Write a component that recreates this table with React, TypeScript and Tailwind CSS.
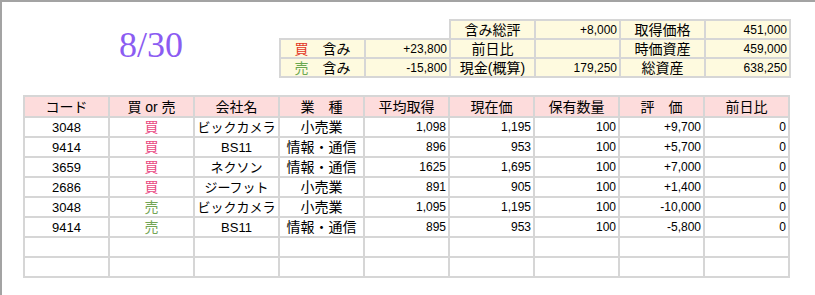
import React from 'react';

const font = "font-['Liberation_Sans','Noto_Sans_CJK_JP',sans-serif]";

const headers = ['コード', '買 or 売', '会社名', '業　種', '平均取得', '現在価', '保有数量', '評　価', '前日比'];

const rows: string[][] = [
  ['3048', '買', 'ビックカメラ', '小売業', '1,098', '1,195', '100', '+9,700', '0'],
  ['9414', '買', 'BS11', '情報・通信', '896', '953', '100', '+5,700', '0'],
  ['3659', '買', 'ネクソン', '情報・通信', '1625', '1,695', '100', '+7,000', '0'],
  ['2686', '買', 'ジーフット', '小売業', '891', '905', '100', '+1,400', '0'],
  ['3048', '売', 'ビックカメラ', '小売業', '1,095', '1,195', '100', '-10,000', '0'],
  ['9414', '売', 'BS11', '情報・通信', '895', '953', '100', '-5,800', '0'],
  ['', '', '', '', '', '', '', '', ''],
  ['', '', '', '', '', '', '', '', ''],
];

const sc = 'border-2 border-[#d6d6d6] bg-[#fefadf] h-[19px] p-0 leading-none whitespace-nowrap';

function Summary() {
  return (
    <table className="table-fixed border-collapse w-[511px] text-black">
      <colgroup>
        {[0, 1, 2, 3, 4, 5].map((i) => (
          <col key={i} className="w-[85px]" />
        ))}
      </colgroup>
      <tbody>
        <tr>
          <td className="h-[19px] p-0" />
          <td className="h-[19px] p-0" />
          <td className={`${sc} text-center text-[14px]`}>含み総評</td>
          <td className={`${sc} text-right text-[12px] pr-[2px]`}>+8,000</td>
          <td className={`${sc} text-center text-[14px]`}>取得価格</td>
          <td className={`${sc} text-right text-[12px] pr-[2px]`}>451,000</td>
        </tr>
        <tr>
          <td className={`${sc} text-center text-[14px]`}>
            <span className="text-[#e2361f]">買</span>　含み
          </td>
          <td className={`${sc} text-right text-[12px] pr-[2px]`}>+23,800</td>
          <td className={`${sc} text-center text-[14px]`}>前日比</td>
          <td className={`${sc} text-right text-[12px] pr-[2px]`}></td>
          <td className={`${sc} text-center text-[14px]`}>時価資産</td>
          <td className={`${sc} text-right text-[12px] pr-[2px]`}>459,000</td>
        </tr>
        <tr>
          <td className={`${sc} text-center text-[14px]`}>
            <span className="text-[#6aa84f]">売</span>　含み
          </td>
          <td className={`${sc} text-right text-[12px] pr-[2px]`}>-15,800</td>
          <td className={`${sc} text-center text-[14px]`}>現金(概算)</td>
          <td className={`${sc} text-right text-[12px] pr-[2px]`}>179,250</td>
          <td className={`${sc} text-center text-[14px]`}>総資産</td>
          <td className={`${sc} text-right text-[12px] pr-[2px]`}>638,250</td>
        </tr>
      </tbody>
    </table>
  );
}

function Holdings() {
  return (
    <table className="table-fixed border-collapse w-[767px] text-black">
      <colgroup>
        {headers.map((h) => (
          <col key={h} className="w-[85px]" />
        ))}
      </colgroup>
      <thead>
        <tr>
          {headers.map((h) => (
            <th
              key={h}
              className="border-2 border-[#d6d6d6] bg-[#fddcdc] h-[21px] p-0 text-center text-[14px] font-normal leading-none whitespace-nowrap"
            >
              {h}
            </th>
          ))}
        </tr>
      </thead>
      <tbody>
        {rows.map((r, i) => (
          <tr key={i}>
            {r.map((v, j) => {
              const num = j >= 4;
              let color = '';
              if (j === 1) color = v === '買' ? 'text-[#e9477f]' : 'text-[#73a555]';
              let size = num ? 'text-right text-[12px] pr-[2px]' : 'text-center text-[14px]';
              if (j === 0 || j === 2) size = 'text-center text-[13px]';
              return (
                <td
                  key={j}
                  className={`border-2 border-[#d6d6d6] bg-white h-[20px] p-0 leading-none whitespace-nowrap overflow-hidden ${size} ${color}`}
                >
                  {v}
                </td>
              );
            })}
          </tr>
        ))}
      </tbody>
    </table>
  );
}

export default function App() {
  return (
    <div className={`w-[815px] h-[295px] bg-white border-t-2 border-l-2 border-[#a3a3a3] overflow-hidden ${font}`}>
      <div className="flex items-start pl-[21px] pt-[17px]">
        <div className="w-[256px] h-[58px] flex items-center justify-center">
          <span className="font-['Liberation_Serif',serif] text-[36px] leading-none text-[#8b5cf2] mb-[6px]">8/30</span>
        </div>
        <Summary />
      </div>
      <div className="pl-[21px] mt-[17px]">
        <Holdings />
      </div>
    </div>
  );
}
